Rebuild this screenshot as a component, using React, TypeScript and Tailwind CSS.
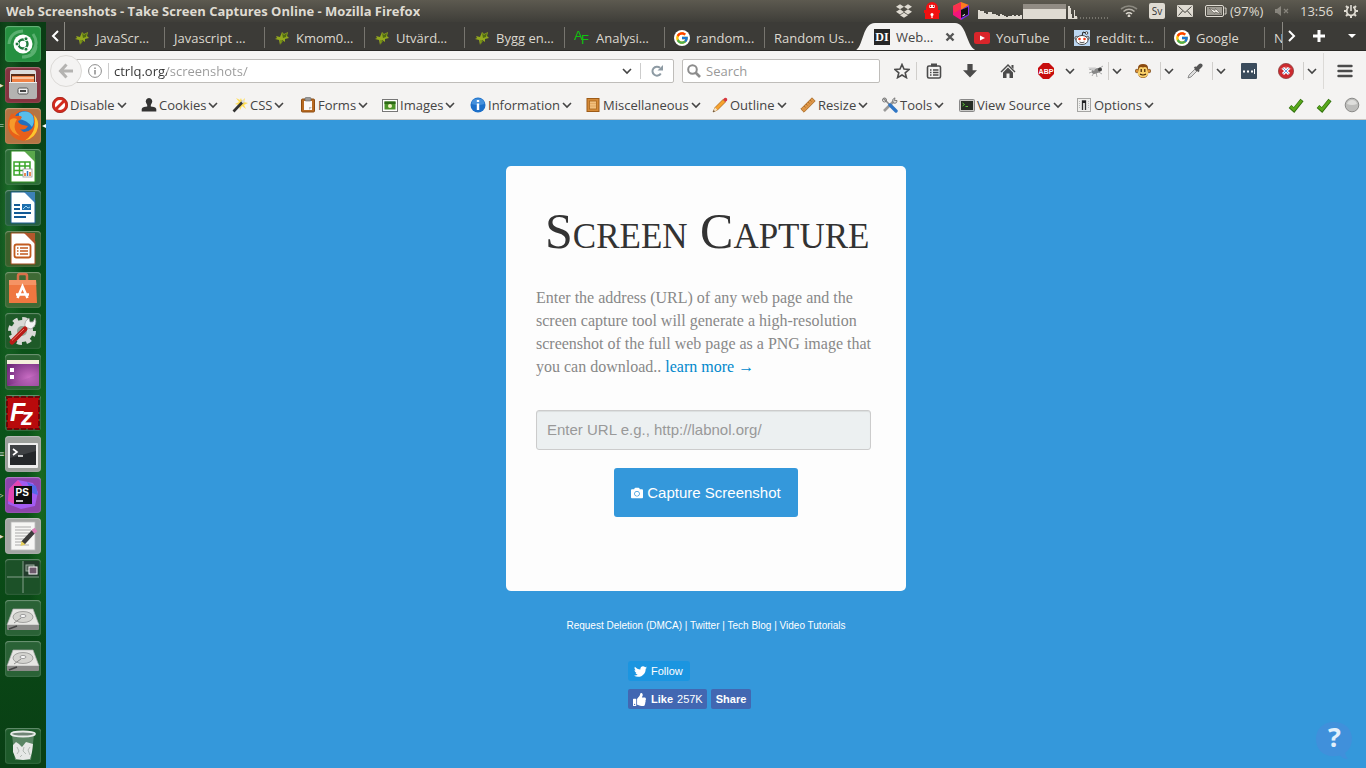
import React from "react";
import { FcGoogle } from "react-icons/fc";
import { FaTwitter, FaThumbsUp, FaDropbox, FaCamera } from "react-icons/fa";

type Kids = { children?: React.ReactNode };

const UI = "font-['Open_Sans','Noto_Sans',sans-serif]";
const SANS = "font-['Liberation_Sans',Arial,sans-serif]";

function Chevron({ className = "text-[#444]" }: { className?: string }) {
  return (
    <svg className={"h-2 w-[10px] shrink-0 " + className} viewBox="0 0 10 8" fill="none" stroke="currentColor" strokeWidth="1.6">
      <path d="M1 2 L5 6 L9 2" />
    </svg>
  );
}

/* ---------- system panel ---------- */

const graphBars = [9, 8, 8, 6, 5, 7, 7, 5, 5, 4, 3, 5, 4, 3, 2, 3, 3, 4, 3, 4, 3, 4];

function Panel() {
  return (
    <header className="flex h-[22px] shrink-0 items-center bg-linear-to-b from-[#5d5a50] to-[#3f3e39] pr-2 pb-px pl-[6px] text-[#dfdbd2]">
      <h1 className="truncate text-[13px] leading-5 font-bold">Web Screenshots - Take Screen Captures Online - Mozilla Firefox</h1>
      <div className="ml-auto flex shrink-0 items-center">
        <span className="flex w-7 justify-center"><FaDropbox className="h-4 w-4" /></span>
        <span className="flex w-7 justify-center">
          <svg className="h-[18px] w-4" viewBox="0 0 16 18">
            <path d="M2 9 V6 a6 6 0 0 1 12 0 V9 Z M0 8 H16 V11 H0 Z M1 11 H15 V17 H1 Z" fill="#f01010" />
            <path d="M5 3.500 Q8 2 11 3.500 L10.500 6 H5.500 Z" fill="#fff" />
            <path d="M6.500 3.500 V5 M9.500 3.500 V5" stroke="#c00" strokeWidth="1.200" />
            <circle cx="8" cy="12.500" r="1.500" fill="#fff" />
            <path d="M8 13 V16" stroke="#fff" strokeWidth="1.200" />
          </svg>
        </span>
        <span className="flex w-[30px] justify-center">
          <svg className="h-5 w-[18px]" viewBox="0 0 18 20">
            <path d="M9 1 L17 4 L9 9 L1 5 Z" fill="#fd7a1e" />
            <path d="M1 5 L9 9 L9 19 L1 14 Z" fill="#f3147c" />
            <path d="M9 1 L1 5 L2 12 L9 8 Z" fill="#f9304e" />
            <path d="M17 4 L17 14 L9 19 V9 Z" fill="#7c2cf0" />
            <path d="M9 9 L16 6 V13.500 L9 17 Z" fill="#111" />
            <path d="M10.500 14.800 L13 13.500" stroke="#fff" />
          </svg>
        </span>
        <svg className="mr-[3px] ml-[2px] h-4 w-[134px]" viewBox="0 0 134 16">
          {graphBars.map((h, i) => (
            <rect key={i} x={i * 2} y={16 - h} width="2" height={h} fill="#dfdbd2" />
          ))}
          <rect x="45" y="1" width="43" height="15" fill="#dfdbd2" />
          <rect x="45" y="1" width="43" height="5" fill="#918c84" />
          <path d="M90 16 V3 h2 V5 h1 V11 h1 V15 h2 V7 h1 V13 h2 V16 Z" fill="#dfdbd2" />
          <path d="M99 15 H132" stroke="#aaa69d" strokeWidth="1" strokeDasharray="1 2" />
        </svg>
        <span className="flex w-7 justify-center">
          <svg className="h-3 w-[18px]" viewBox="0 0 18 12" fill="none" stroke="#dfdbd2" strokeWidth="1.600">
            <path d="M1 4 Q9 -2 17 4" opacity=".4" />
            <path d="M3.500 6.500 Q9 2 14.500 6.500" opacity=".7" />
            <path d="M6 9 Q9 6.500 12 9" />
            <circle cx="9" cy="11" r=".6" />
          </svg>
        </span>
        <span className="flex w-7 justify-center">
          <span className="h-4 w-4 rounded-xs bg-[#dfdbd2] text-center text-[10px] leading-4 text-[#333]">Sv</span>
        </span>
        <span className="flex w-7 justify-center">
          <svg className="h-3 w-4" viewBox="0 0 16 12">
            <rect width="16" height="12" rx="1" fill="#dfdbd2" />
            <path d="M1.500 1.500 L8 7.500 L14.500 1.500 M1.500 10.500 L5.500 6 M14.500 10.500 L10.500 6" stroke="#45443f" fill="none" />
          </svg>
        </span>
        <svg className="mr-[3px] ml-[6px] h-3 w-[22px]" viewBox="0 0 22 12">
          <rect x=".5" y=".5" width="18" height="11" rx="1.500" fill="none" stroke="#dfdbd2" />
          <rect x="2" y="2" width="15" height="8" fill="#dfdbd2" opacity=".55" />
          <path d="M19.500 3 H21 V9 H19.500" fill="none" stroke="#dfdbd2" />
          <path d="M4 3 L10 5.500 L10.500 3.500 L16 9 L10 7 L9.500 8.500 Z" fill="#f2efe8" stroke="#55534c" strokeWidth=".6" />
        </svg>
        <span className="w-[34px] text-[13px] leading-5 whitespace-nowrap">(97%)</span>
        <span className="flex w-9 justify-center">
          <svg className="h-3 w-4 opacity-40" viewBox="0 0 16 12">
            <path d="M1 4 H3 L7 1 V11 L3 8 H1 Z" fill="#dfdbd2" />
            <path d="M10 4 L14 8 M14 4 L10 8" stroke="#dfdbd2" strokeWidth="1.200" />
          </svg>
        </span>
        <span className="w-11 text-[13px] leading-5">13:56</span>
        <svg className="h-[14px] w-[14px]" viewBox="0 0 14 14" fill="none" stroke="#dfdbd2">
          <circle cx="7" cy="7" r="4.300" strokeWidth="1.800" />
          <path d="M0 7 H2.500 M11.500 7 H14 M2 2 L4 4 M12 2 L10 4 M2 12 L4 10 M12 12 L10 10 M7 11.500 V14" strokeWidth="2" />
          <path d="M7 0 V7" stroke="#4d4b44" strokeWidth="4" />
          <path d="M7 1 V7" strokeWidth="1.600" />
        </svg>
      </div>
    </header>
  );
}

/* ---------- launcher ---------- */

const icons: Record<string, React.ReactNode> = {
  Dash: (
    <>
      <path d="M4 18 Q5 6 18 5 M31 20 Q30 31 17 31 M28 8 Q35 18 26 27" stroke="#8fd0a0" strokeWidth="3" fill="none" opacity=".5" />
      <circle cx="18" cy="18" r="9.500" fill="#fff" />
      <circle cx="18" cy="18" r="4.500" fill="none" stroke="#1d7a3c" strokeWidth="2.400" />
      <g fill="#1d7a3c" stroke="#fff" strokeWidth="1">
        <circle cx="12" cy="18" r="2" /><circle cx="21" cy="12.800" r="2" /><circle cx="21" cy="23.200" r="2" />
      </g>
    </>
  ),
  Files: (
    <>
      <path d="M5 5 Q5 3 7 3 H29 Q31 3 31 5 V16 H5 Z" fill="#dcdcdc" />
      <rect x="6" y="7" width="24" height="8" fill="#5a2d18" />
      <path d="M7 9 H29 V15 H7 Z" fill="#f08246" />
      <path d="M7 11 H29" stroke="#fbd9bd" strokeWidth="1.500" />
      <path d="M4 15 H32 V30 Q32 32 30 32 H6 Q4 32 4 30 Z" fill="#b4b3b1" />
      <path d="M4 15.500 H32" stroke="#eee" />
      <rect x="13" y="21" width="10" height="6" rx="1.500" fill="#eee" stroke="#555" />
      <path d="M15 24 H21" stroke="#444" strokeWidth="2" />
    </>
  ),
  Firefox: (
    <>
      <circle cx="18" cy="17.500" r="15" fill="#e8641b" />
      <circle cx="19" cy="13.500" r="10.500" fill="#1f6fc0" />
      <path d="M14 5 Q23 1 28 8 Q30 14 27 19 Q22 12 14 11 Z" fill="#58bdea" />
      <path d="M3 17 Q3 10 7 5 Q8 8 11 8 Q15 7 17 9 Q16 12 13 13 Q14 16 18 17 L23 18 Q20 23 15 21 Q20 27 26 23 Q30 19 29 9 Q34 14 33 19 Q31 32 18 32.500 Q4 31 3 17 Z" fill="#e8601a" />
      <path d="M29 7 Q34 12 33 19 Q31 30 20 32.500 Q28 27 29.500 19 Q30.500 13 29 7 Z" fill="#fbc52f" />
      <path d="M5 12 Q8 9 12 11 L10 15 Q8 23 15 28 Q5 25 4.500 17 Z" fill="#f79a2a" />
    </>
  ),
  Calc: (
    <>
      <path d="M6 2 H22 L30 10 V33 H6 Z" fill="#fff" stroke="#2f8f20" />
      <path d="M19 2 H30 V13 Z" fill="#5aa84b" />
      <g fill="none" stroke="#3aa628" strokeWidth="1.500">
        <rect x="9" y="13" width="16" height="13" /><path d="M9 17 H25 M9 21.500 H25 M14.500 13 V26 M20 13 V26" />
      </g>
      <rect x="18" y="20" width="9" height="8" fill="#fff" stroke="#999" strokeWidth=".8" />
      <path d="M20 27 V24 M25 27 V23" stroke="#e0641b" strokeWidth="1.500" />
      <path d="M22.500 27 V22" stroke="#2f76c5" strokeWidth="1.500" />
    </>
  ),
  Writer: (
    <>
      <path d="M6 2 H22 L30 10 V33 H6 Z" fill="#fff" stroke="#1a5a8e" />
      <path d="M19 2 H30 V13 Z" fill="#3d81b8" />
      <path d="M9 15 H15 M9 19 H15 M9 23 H26 M9 27 H21" stroke="#145a96" strokeWidth="2" />
      <rect x="17" y="14" width="9" height="6" fill="#1d6fae" />
      <path d="M18 19 L21 16 L23 18 L25 17" stroke="#9fd2ef" fill="none" />
    </>
  ),
  Impress: (
    <>
      <path d="M6 2 H22 L30 10 V33 H6 Z" fill="#fff" stroke="#a34a1c" />
      <path d="M19 2 H30 V13 Z" fill="#b3572c" />
      <rect x="9.500" y="13.500" width="16" height="13" rx="2" fill="#fff" stroke="#c25a1e" strokeWidth="1.800" />
      <path d="M15 17 H23 M15 20 H23 M15 23 H23" stroke="#c25a1e" strokeWidth="1.500" />
      <path d="M12 17 H13.500 M12 20 H13.500 M12 23 H13.500" stroke="#c25a1e" strokeWidth="1.500" />
    </>
  ),
  Software: (
    <>
      <path d="M13 9 V4 Q13 2 15 2 H20 Q22 2 22 4 V9" fill="none" stroke="#d9714a" strokeWidth="2.500" />
      <path d="M4 8 H31 L32 31 H4 Z" fill="#ef7740" />
      <path d="M4 8 H31 L31.300 13 H4 Z" fill="#f59364" />
      <path d="M12.500 26 L17.500 14.500 L22.500 26 M11 22.500 H24" stroke="#fff" strokeWidth="2.500" fill="none" />
    </>
  ),
  Settings: (
    <>
      <circle cx="17" cy="18" r="11" fill="#d9d9d7" />
      <circle cx="17" cy="18" r="12" fill="none" stroke="#d9d9d7" strokeWidth="4" strokeDasharray="5 4.400" />
      <circle cx="17" cy="18" r="5" fill="#95a497" />
      <path d="M20 14 Q19 8 24 5 L25 9 L28 9 L30 5 Q33 12 26 16 Z" fill="#f5f5f5" stroke="#999" strokeWidth=".7" />
      <path d="M7 29 L20 16" stroke="#b81c18" strokeWidth="5" strokeLinecap="round" />
      <path d="M7 27.500 L19 16" stroke="#ed766c" strokeWidth="1" />
    </>
  ),
  Workspace: (
    <>
      <rect x="2" y="6" width="32" height="26" rx="1" fill="url(#purple)" />
      <rect x="2" y="6" width="32" height="4" fill="#f4efdc" />
      <path d="M5 14 H9 V18 H5 Z M5 21 H9 V25 H5 Z" fill="#fff" />
      <path d="M2 32 L34 20 V32 Z" fill="#a355a8" opacity=".4" />
    </>
  ),
  FileZilla: (
    <>
      <rect x="2" y="2" width="32" height="32" fill="#b80a0c" stroke="#6c0808" strokeWidth="2" strokeDasharray="5 2" />
      <text x="5" y="26" fontSize="25" fontStyle="italic" fontWeight="bold" fill="#fff" fontFamily="Liberation Sans">
        F<tspan x="16" dy="4" fontSize="24">z</tspan>
      </text>
    </>
  ),
  Terminal: (
    <>
      <rect x="3" y="7" width="30" height="25" rx="1" fill="#eee" />
      <rect x="5" y="9" width="26" height="20" fill="#24272a" />
      <path d="M5 9 H31 V15 L5 22 Z" fill="#3e4144" />
      <path d="M8 13 L12 16 L8 19 M13 20 H18" stroke="#fff" strokeWidth="1.600" fill="none" />
    </>
  ),
  PhpStorm: (
    <>
      <path d="M4 12 L13 3 L28 6 L33 15 L30 29 L16 32 L3 27 Z" fill="#a35bf2" />
      <path d="M4 12 L13 3 L19 11 L9 27 L3 24 Z" fill="#e345b0" />
      <path d="M22 5 L31 9 L33 18 L27 16 Z" fill="#5468e8" />
      <rect x="9" y="9" width="18" height="18" fill="#0d0d10" />
      <text x="10.500" y="18.500" fontSize="10" fontWeight="bold" fill="#fff" fontFamily="Liberation Sans">PS</text>
      <path d="M11 24 H18" stroke="#fff" strokeWidth="1.500" />
    </>
  ),
  "Text Editor": (
    <>
      <rect x="6" y="4" width="24" height="28" fill="#f6f6f4" stroke="#bbb" strokeWidth=".8" />
      <path d="M10 9 H26 M10 12 H26 M10 15 H24 M10 18 H22 M10 21 H20 M10 24 H18 M10 27 H24" stroke="#aaa" strokeWidth="1" />
      <path d="M18 25 L29 13" stroke="#3b3b3b" strokeWidth="4.500" />
      <path d="M28 14 L31 11.500" stroke="#dd7fb8" strokeWidth="4.500" />
      <path d="M15.500 28 L16.500 23 L20.500 26.500 Z" fill="#e7d15c" />
    </>
  ),
  Workspaces: (
    <>
      <rect x="18" y="2" width="16" height="16" fill="#223c2c" />
      <path d="M18 2 V34 M2 18 H34" stroke="#83a08a" />
      <rect x="21" y="6" width="8" height="6" fill="#4f6055" stroke="#98aa9d" />
      <rect x="24" y="8" width="8" height="7" fill="#6c5a6c" stroke="#fff" />
    </>
  ),
  Disk: (
    <>
      <path d="M8 9 H28 L34 25 H2 Z" fill="#e6e6e3" stroke="#aaa" strokeWidth=".7" />
      <ellipse cx="18" cy="17" rx="10" ry="5.500" fill="#d3d3cf" stroke="#a2a2a0" />
      <ellipse cx="18" cy="16" rx="3" ry="1.500" fill="#fff" stroke="#999" />
      <path d="M9 23 L16 18" stroke="#8d8d8b" />
      <path d="M2 25 H34 V29 Q34 30 33 30 H3 Q2 30 2 29 Z" fill="#8a8a88" />
      <path d="M4 29 L12 26" stroke="#444" strokeWidth="1.500" />
    </>
  ),
  Trash: (
    <>
      <path d="M7 7 L10 32 H26 L29 7 Z" fill="#cfd8d1" opacity=".35" />
      <ellipse cx="18" cy="6" rx="12" ry="2.500" fill="#6f8575" stroke="#e8ece9" strokeWidth="1.800" />
      <path d="M8 17 L11 14 L14 16 L17 19 L21 14 L28 16 L27 24 L25 31 L18 32 L11 31 L8 24 Z" fill="#e6e8e6" />
      <path d="M12 19 L14 23 L12 26 M19 19 L18 23 L21 26 M25 19 L23 22 L25 27 M15 29 L17 27" stroke="#b3bab4" fill="none" />
    </>
  ),
};

const launcher = [
  { icon: "Dash", tile: "bg-[#259040]", mark: "" },
  { icon: "Files", tile: "bg-[#84333f]", mark: "▸" },
  { icon: "Firefox", tile: "bg-[#b57443]", mark: "=" },
  { icon: "Calc", tile: "bg-[#2c6c37]", mark: "" },
  { icon: "Writer", tile: "bg-[#266041]", mark: "" },
  { icon: "Impress", tile: "bg-[#3b602b]", mark: "" },
  { icon: "Software", tile: "bg-[#3e6a35]", mark: "" },
  { icon: "Settings", tile: "bg-[#1e5a28]", mark: "" },
  { icon: "Workspace", tile: "bg-[#2c6433]", mark: "" },
  { icon: "FileZilla", tile: "bg-[#256031]", mark: "" },
  { icon: "Terminal", tile: "bg-[#9b9f9b]", mark: "≡" },
  { icon: "PhpStorm", tile: "bg-[#8c44ab]", mark: "▹" },
  { icon: "Text Editor", tile: "bg-[#a3a5a3]", mark: "▸" },
  { icon: "Workspaces", tile: "bg-[#1c5128]", mark: "" },
  { icon: "Disk", tile: "bg-[#2a6236]", mark: "" },
  { icon: "Disk", tile: "bg-[#2a6236]", mark: "" },
];

function Tile({ icon, tile, mark }: { icon: string; tile: string; mark: string }) {
  return (
    <button type="button" aria-label={icon} className="relative flex w-full justify-center">
      {mark && <span className="absolute top-3 -left-px text-[9px] leading-3 text-[#d5ddd6]">{mark}</span>}
      {icon === "Firefox" && (
        <svg className="absolute top-4 right-0 h-1 w-1" viewBox="0 0 4 4" fill="#fff"><path d="M4 0 V4 L0 2 Z" /></svg>
      )}
      <svg className={"h-9 w-9 rounded-sm shadow-[inset_0_1px_1px_#ffffff44,inset_0_0_2px_#ffffff44] " + tile} viewBox="0 0 36 36">
        {icons[icon]}
      </svg>
    </button>
  );
}

function Launcher() {
  return (
    <nav
      aria-label="Launcher"
      className="flex w-[46px] shrink-0 flex-col gap-[5px] bg-[#0b4c18] bg-[radial-gradient(ellipse_at_20%_25%,#1d6b2a_0%,transparent_30%),radial-gradient(ellipse_at_90%_62%,#1a6a20_0%,transparent_25%),linear-gradient(#0a3c14,#0b5519_50%,#093f14)] pt-1 pb-1"
    >
      <svg className="absolute h-0 w-0" aria-hidden="true">
        <defs>
          <radialGradient id="purple" cx=".7" cy=".7" r=".8">
            <stop offset="0" stopColor="#cc6fc6" />
            <stop offset="1" stopColor="#6f2a7a" />
          </radialGradient>
        </defs>
      </svg>
      {launcher.map((l, i) => (
        <Tile key={i} {...l} />
      ))}
      <div className="flex flex-1 flex-col justify-end">
        <Tile icon="Trash" tile="bg-[#1d5a2a]" mark="" />
      </div>
    </nav>
  );
}

/* ---------- tabs ---------- */

const leaf = (
  <svg className="h-4 w-4" viewBox="0 0 16 16">
    <path d="M2 6 L6 7 L8 2 L10 4 L14 2 L13 6 L15 8 L11 9 L11 12 L8 10 L6 15 L5 10 L1 9 L3 8 Z" fill="#93a81d" />
    <path d="M8 3 L10 5 L13 3 L12 7 L9 8 Z" fill="#4f6a12" />
    <path d="M6 10 L9 11 L7 14 Z" fill="#6f8a14" />
  </svg>
);
const google = (
  <span className="flex h-4 w-4 items-center justify-center rounded-full bg-white">
    <FcGoogle className="h-[14px] w-[14px]" />
  </span>
);
const af = (
  <svg className="h-4 w-4" viewBox="0 0 16 16">
    <text x="0" y="10" fontSize="13" fill="#0fc40f" fontFamily="Liberation Sans">
      A<tspan x="7" dy="4">F</tspan>
    </text>
  </svg>
);
const youtube = (
  <svg className="h-4 w-4" viewBox="0 0 16 16">
    <rect y="2" width="16" height="12" rx="2.500" fill="#d9252a" />
    <path d="M6 5.500 L11 8 L6 10.500 Z" fill="#fff" />
  </svg>
);
const reddit = (
  <svg className="h-4 w-4" viewBox="0 0 16 16">
    <rect width="16" height="16" fill="#bcd7f2" />
    <path d="M8 6 L9 2 L12 3" fill="none" stroke="#222" />
    <circle cx="12.500" cy="3" r="1.300" fill="#fff" stroke="#222" strokeWidth=".8" />
    <circle cx="2.500" cy="8" r="1.600" fill="#fff" stroke="#222" strokeWidth=".8" />
    <circle cx="13.500" cy="8" r="1.600" fill="#fff" stroke="#222" strokeWidth=".8" />
    <ellipse cx="8" cy="10" rx="6" ry="4.500" fill="#fff" stroke="#222" strokeWidth=".8" />
    <circle cx="5.500" cy="9" r="1.300" fill="#f33b1a" />
    <circle cx="10.500" cy="9" r="1.300" fill="#f33b1a" />
    <path d="M5.500 12 Q8 13.500 10.500 12" fill="none" stroke="#222" strokeWidth=".8" />
  </svg>
);

const tabsBefore = [
  { icon: leaf, text: "JavaScr…" },
  { icon: null, text: "Javascript …" },
  { icon: leaf, text: "Kmom0…" },
  { icon: leaf, text: "Utvärd…" },
  { icon: leaf, text: "Bygg en…" },
  { icon: af, text: "Analysi…" },
  { icon: google, text: "random…" },
  { icon: null, text: "Random Us…" },
];
const tabsAfter = [
  { icon: youtube, text: "YouTube" },
  { icon: reddit, text: "reddit: t…" },
  { icon: google, text: "Google" },
  { icon: null, text: "N" },
];

function Tab({ icon, text, line }: { icon: React.ReactNode; text: string; line: boolean }) {
  return (
    <button
      type="button"
      role="tab"
      aria-selected="false"
      className={"mt-[5px] mb-[2px] flex w-[100px] shrink-0 items-center gap-[6px] overflow-hidden border-r pl-[9px] text-[13px] leading-5 whitespace-nowrap " + (line ? "border-[#77756f]" : "border-transparent")}
    >
      {icon}
      {text}
    </button>
  );
}

function TabBar() {
  return (
    <div className="flex h-[29px] border-b border-[#2a2926] bg-[#3c3b37] text-[#dcd8cf]">
      <button type="button" aria-label="Scroll tabs left" className="flex w-[19px] shrink-0 items-center justify-center border-r border-[#8a8882] text-white">
        <svg className="h-3 w-2" viewBox="0 0 8 12" fill="none" stroke="currentColor" strokeWidth="2"><path d="M7 1 L2 6 L7 11" /></svg>
      </button>
      <div role="tablist" className="flex min-w-0 flex-1 overflow-hidden">
        {tabsBefore.map((t, i) => (
          <Tab key={i} {...t} line={i < 7} />
        ))}
        <div className="relative mt-px -mb-px flex w-[100px] shrink-0 items-center text-[#444]">
          <svg className="absolute top-0 -left-3 h-full w-[126px]" viewBox="0 0 126 28" preserveAspectRatio="none">
            <path d="M0 28 C11 28 8 0 22 0 H102 C115 0 113 28 126 28 Z" fill="#f4f3f2" />
          </svg>
          <button type="button" role="tab" aria-selected="true" className="relative flex flex-1 items-center gap-[6px] pl-[9px] text-[13px] leading-5">
            <span className="h-4 w-4 bg-[#262626] text-center font-['Liberation_Serif',serif] text-[12px] leading-4 font-bold text-white">DI</span>
            Web…
          </button>
          <button type="button" aria-label="Close tab" className="relative mr-[10px]">
            <svg className="h-[10px] w-[10px]" viewBox="0 0 10 10" stroke="#555" strokeWidth="2.400"><path d="M1.500 1.500 L8.500 8.500 M8.500 1.500 L1.500 8.500" /></svg>
          </button>
        </div>
        {tabsAfter.map((t, i) => (
          <Tab key={i} {...t} line />
        ))}
      </div>
      <div className="flex shrink-0 text-white">
        <button type="button" aria-label="Scroll tabs right" className="flex w-[18px] items-center justify-center border-l border-[#8a8882] bg-[#3c3b37]">
          <svg className="h-3 w-2" viewBox="0 0 8 12" fill="none" stroke="currentColor" strokeWidth="2"><path d="M1 1 L6 6 L1 11" /></svg>
        </button>
        <button type="button" aria-label="New tab" className="flex w-[38px] items-center justify-center">
          <svg className="h-3 w-3" viewBox="0 0 12 12" stroke="currentColor" strokeWidth="3"><path d="M6 0 V12 M0 6 H12" /></svg>
        </button>
        <button type="button" aria-label="List all tabs" className="flex w-7 items-center justify-center">
          <svg className="h-1 w-2" viewBox="0 0 8 4" fill="currentColor"><path d="M0 0 H8 L4 4 Z" /></svg>
        </button>
      </div>
    </div>
  );
}

/* ---------- navigation bar ---------- */

function Tool({ label, width, children }: Kids & { label: string; width: string }) {
  return (
    <button type="button" aria-label={label} className={"flex h-6 shrink-0 items-center justify-center text-[#4b4b4b] " + width}>
      {children}
    </button>
  );
}
const Sep = () => <span className="h-[18px] w-px shrink-0 bg-[#d0cecb]" />;

function NavBar() {
  return (
    <div className="flex h-10 items-center bg-[#f4f3f2] pl-1 text-[#333]">
      <button type="button" aria-label="Back" className="z-10 flex h-8 w-8 shrink-0 items-center justify-center rounded-full border border-[#dcdad7] bg-[#f4f3f2]">
        <svg className="h-4 w-4" viewBox="0 0 16 16" fill="none" stroke="#b4b3b1" strokeWidth="3"><path d="M8.500 1.500 L2.500 8 L8.500 14.500 M3 8 H15" /></svg>
      </button>
      <div className="-ml-2 flex h-6 min-w-0 flex-1 items-center rounded-r-xs border border-[#bfbdba] bg-white pl-[13px]">
        <svg className="h-[14px] w-[14px] shrink-0" viewBox="0 0 14 14" fill="none" stroke="#8c8c8c">
          <circle cx="7" cy="7" r="6.400" /><path d="M7 6 V10.500 M7 3.500 V5" strokeWidth="1.500" />
        </svg>
        <span className="mr-[5px] ml-[6px] h-4 w-px shrink-0 bg-[#ccc]" />
        <input
          aria-label="Address"
          defaultValue="ctrlq.org/screenshots/"
          className="min-w-0 flex-1 bg-[linear-gradient(90deg,#333_53px,#999_53px)] bg-clip-text text-[13px] leading-5 text-transparent caret-black outline-none"
        />
        <button type="button" aria-label="History" className="flex w-6 justify-center"><Chevron /></button>
        <span className="ml-px h-4 w-px bg-[#ccc]" />
        <button type="button" aria-label="Reload" className="flex w-8 justify-center">
          <svg className="h-3 w-3" viewBox="0 0 12 12" fill="none" stroke="#8d9aa3" strokeWidth="2"><path d="M9.800 8.500 A4.500 4.500 0 1 1 9 2.800" /><path d="M12 0 V5.500 H6.500 Z" fill="#8d9aa3" stroke="none" /></svg>
        </button>
      </div>
      <label className="ml-2 flex h-6 w-[198px] shrink-0 items-center gap-[5px] rounded-xs border border-[#bfbdba] bg-white pl-1">
        <svg className="h-[14px] w-[14px]" viewBox="0 0 14 14" fill="none" stroke="#8c8c8c" strokeWidth="2"><circle cx="5.500" cy="5.500" r="4.300" /><path d="M8.500 8.500 L13 13" strokeWidth="2.600" /></svg>
        <input aria-label="Search" placeholder="Search" className="min-w-0 flex-1 text-[13px] leading-5 outline-none placeholder:text-[#999]" />
      </label>
      <div className="ml-2 flex shrink-0 items-center">
        <Tool label="Bookmark" width="w-7">
          <svg className="h-4 w-4" viewBox="0 0 16 16" fill="none" stroke="currentColor" strokeWidth="1.600"><path d="M8 1.500 L10 6 L15 6.500 L11.200 9.800 L12.400 14.600 L8 12 L3.600 14.600 L4.800 9.800 L1 6.500 L6 6 Z" /></svg>
        </Tool>
        <Sep />
        <Tool label="Bookmarks list" width="w-[34px]">
          <svg className="h-4 w-4" viewBox="0 0 16 16" fill="none" stroke="currentColor" strokeWidth="1.600"><rect x="1.500" y="3" width="13" height="12" rx="1.500" /><path d="M5 2 H11" strokeWidth="3" /><path d="M4 7 H5.500 M7 7 H12.500 M4 9.500 H5.500 M7 9.500 H12.500 M4 12 H5.500 M7 12 H12.500" strokeWidth="1.300" /></svg>
        </Tool>
        <Tool label="Downloads" width="w-[38px]"><svg className="h-[14px] w-[14px]" viewBox="0 0 16 16" fill="currentColor"><path d="M5 0 H11 V7 H16 L8 15.500 L0 7 H5 Z" /></svg></Tool>
        <Tool label="Home" width="w-[38px]"><svg className="h-4 w-4" viewBox="0 0 16 16" fill="currentColor"><path d="M8 1 L15.500 8.500 L14.500 9.500 L8 3 L1.500 9.500 L.5 8.500 Z M11.500 2 H13.500 V6 L11.500 4 Z M3 9.500 L8 4.500 L13 9.500 V15 H9.500 V10.500 H6.500 V15 H3 Z" /></svg></Tool>
        <Tool label="Adblock Plus" width="w-[38px]">
          <svg className="h-4 w-4" viewBox="0 0 16 16"><path d="M5 0 H11 L16 5 V11 L11 16 H5 L0 11 V5 Z" fill="#c70d0d" /><text x="8" y="10.500" textAnchor="middle" fontSize="7" fontWeight="bold" fill="#fff" fontFamily="Liberation Sans">ABP</text></svg>
        </Tool>
        <Tool label="Adblock menu" width="w-[10px]"><Chevron /></Tool>
        <Tool label="Firebug" width="w-[33px] pl-2">
          <svg className="h-4 w-4" viewBox="0 0 16 16"><path d="M1 6 L7 8 L15 3 M1 10 L7 8 L4 13 M9 8 L14 11 M8 9 L9 14" stroke="#aaa" fill="none" /><ellipse cx="8" cy="8" rx="4.500" ry="2.500" fill="#888" transform="rotate(-20 8 8)" /><circle cx="12" cy="6.500" r="2" fill="#444" /><path d="M0 4.500 L8 4.500 L6 8 Z" fill="#ccc" /></svg>
        </Tool>
        <Sep />
        <Tool label="Firebug menu" width="w-4"><Chevron /></Tool>
        <Tool label="Greasemonkey" width="w-[35px]">
          <svg className="h-4 w-4" viewBox="0 0 16 16"><circle cx="2" cy="8" r="1.800" fill="#d98c33" stroke="#5a3008" strokeWidth=".6" /><circle cx="14" cy="8" r="1.800" fill="#d98c33" stroke="#5a3008" strokeWidth=".6" /><path d="M3 5 Q3 1 8 1 Q13 1 13 5 V11 Q12 15 8 15 Q4 15 3 11 Z" fill="#8a4a10" /><path d="M3.500 7 Q4 3 8 4.500 Q12 3 12.500 7 L13.500 11 Q11 14.500 8 14.500 Q5 14.500 2.500 11 Z" fill="#f8cf68" /><path d="M6.200 6 V9 M9.800 6 V9 M5 11 Q8 13 11 11" stroke="#3b1e05" strokeWidth="1.200" fill="none" /></svg>
        </Tool>
        <Sep />
        <Tool label="Greasemonkey menu" width="w-4"><Chevron /></Tool>
        <Tool label="Color picker" width="w-[35px]">
          <svg className="h-4 w-4" viewBox="0 0 16 16"><path d="M1 15 L2 12 L8.500 5.500 L10.500 7.500 L4 14 Z" fill="#ddd" stroke="#777" strokeWidth=".8" /><path d="M7.500 4 L12 8.500" stroke="#555" strokeWidth="2" /><path d="M10 6 L13.500 2.500" stroke="#555" strokeWidth="4" strokeLinecap="round" /></svg>
        </Tool>
        <Sep />
        <Tool label="Color picker menu" width="w-4"><Chevron /></Tool>
        <Tool label="Passwords" width="w-10">
          <svg className="h-4 w-4" viewBox="0 0 16 16"><rect width="16" height="16" rx="1" fill="#3a4b5c" /><path d="M2 8.500 h2 M6 8.500 h2 M10 8.500 h2" stroke="#fff" strokeWidth="2" /><path d="M13.500 6 V11" stroke="#fff" /></svg>
        </Tool>
        <Tool label="Web Developer" width="w-[34px]">
          <svg className="h-4 w-4" viewBox="0 0 16 16"><circle cx="8" cy="8" r="7.600" fill="#cc2a2f" stroke="#8f4040" strokeWidth=".8" /><path d="M2 6 Q8 1 14 6 Q8 8 2 6" fill="#ee8d8d" opacity=".6" /><path d="M5 5 L11 11 M11 5 L5 11" stroke="#fff" strokeWidth="3" /><path d="M5.300 5.300 L10.700 10.700 M10.700 5.300 L5.300 10.700" stroke="#6aa3dc" strokeWidth="1" /></svg>
        </Tool>
        <Sep />
        <Tool label="Web Developer menu" width="w-4"><Chevron /></Tool>
        <span className="ml-[3px] h-9 w-px bg-[#dcdad7]" />
        <Tool label="Open menu" width="w-[42px]"><svg className="h-[14px] w-4" viewBox="0 0 16 14" stroke="currentColor" strokeWidth="2.400" strokeLinecap="round"><path d="M1.500 2 H14.500 M1.500 7 H14.500 M1.500 12 H14.500" /></svg></Tool>
      </div>
    </div>
  );
}

/* ---------- developer toolbar ---------- */

const devIcons: Record<string, React.ReactNode> = {
  Disable: <><circle cx="8" cy="8" r="6.500" fill="#fff" stroke="#d32b1e" strokeWidth="2.800" /><path d="M3.500 12.500 L12.500 3.500" stroke="#d32b1e" strokeWidth="2.800" /><circle cx="8" cy="8" r="7.700" fill="none" stroke="#8f1a12" strokeWidth=".6" /></>,
  Cookies: <path d="M8 1 a3.300 3.300 0 0 1 2.800 5 L9.800 8 V9.500 L13 10 Q15 10.500 15.300 12 V14.500 H.7 V12 Q1 10.500 3 10 L6.200 9.500 V8 L5.200 6 A3.300 3.300 0 0 1 8 1 Z" fill="#333" />,
  CSS: <><path d="M9 1 L10 4 L13 1 L12 5 L16 6 L12 8 L14 12 L10 9 L8 13 L7 8 L3 7 L7 5 L4 1 L8 3 Z" fill="#ffdd55" /><path d="M1.500 14.500 L11 4.500" stroke="#333" strokeWidth="2.600" /><path d="M10 5.500 L12 3.500" stroke="#ddd" strokeWidth="2.600" /></>,
  Forms: <><rect x="1.500" y="2" width="13" height="13" rx="1" fill="#b86a22" stroke="#8d4d11" /><path d="M4 4 H12 V13 H4 Z" fill="#fafafa" /><path d="M9 13 L12 10 H9 Z" fill="#bbb" /><rect x="5" y=".5" width="6" height="3.500" rx="1" fill="#999" stroke="#666" strokeWidth=".6" /></>,
  Images: <><rect x=".5" y="2.500" width="15" height="12" fill="#fff" stroke="#777" /><rect x="2.500" y="4.500" width="11" height="8" fill="#4c9427" /><path d="M2.500 4.500 H13.500 V7 H2.500 Z" fill="#2d6917" /><circle cx="8" cy="9" r="2" fill="#f2f2c5" /></>,
  Information: <><circle cx="8" cy="8" r="7.500" fill="#1c6fc9" /><path d="M1.500 7 Q2 1.500 8 1.500 Q14 1.500 14.500 7 Q8 9 1.500 7" fill="#5fa6ea" opacity=".6" /><path d="M8 3 V5 M8 6.500 V13" stroke="#fff" strokeWidth="2.400" /></>,
  Miscellaneous: <><rect x="2" y="1.500" width="12" height="13" fill="#d58a37" stroke="#9d5b17" /><rect x="4.500" y="4" width="7" height="8" fill="#f2bf7c" stroke="#a8671f" strokeWidth=".8" /><path d="M5 6.500 H11 M5 9 H11" stroke="#e0a057" strokeWidth=".7" /></>,
  Outline: <><path d="M1 15 L3 10.500 L11 2.500 L13.500 5 L5.500 13 Z" fill="#f7a22d" stroke="#a05c0e" strokeWidth=".7" /><path d="M11 2.500 L12.500 1 Q14 .5 15 1.500 Q15.500 3 15 3.500 L13.500 5 Z" fill="#d7373f" /><path d="M3 10.500 L5.500 13 L1 15 Z" fill="#f6e3c5" /><path d="M1 15 L1.800 13.200 L2.800 14.200 Z" fill="#222" /></>,
  Resize: <><path d="M.8 12 L12 .8 L15.200 4 L4 15.200 Z" fill="#dc9547" stroke="#a5641f" strokeWidth=".8" /><path d="M4 9 L5.500 10.500 M6 7 L7.500 8.500 M8 5 L9.500 6.500 M10 3 L11.500 4.500" stroke="#a5641f" strokeWidth=".8" /></>,
  Tools: <><path d="M2 14 L12 4" stroke="#999" strokeWidth="2.600" /><path d="M11 5 Q9.500 2 13 .8 L12.500 3.500 L15 3.500 Q15 7 11.500 6 Z" fill="#ddd" stroke="#666" strokeWidth=".8" /><path d="M1.500 1.500 L8 8" stroke="#888" strokeWidth="1.600" /><path d="M8 8 L14 14" stroke="#2f76c5" strokeWidth="3.400" strokeLinecap="round" /><circle cx="2.500" cy="3" r="2" fill="none" stroke="#777" /></>,
  "View Source": <><rect x=".5" y="2.500" width="15" height="12" rx="1" fill="#c8c8c6" stroke="#888" /><rect x="2" y="4" width="12" height="9" fill="#252c25" /><path d="M3.500 6 L5.500 7.500 L3.500 9 M6.500 9.500 H9" stroke="#5fd33c" fill="none" strokeWidth=".9" /></>,
  Options: <><rect x="1.500" y="1.500" width="13" height="13" fill="#efefed" stroke="#a5a5a3" /><path d="M6.500 13 V4 H9.500 V13" fill="none" stroke="#333" strokeWidth="1.300" /><path d="M6 4 H10 V6 H6 Z" fill="#222" /><path d="M3.500 4 V12 M12.500 4 V12" stroke="#bbb" strokeDasharray="1 1" /></>,
};

const devItems = [
  { label: "Disable", width: "w-[89px]" },
  { label: "Cookies", width: "w-[91px]" },
  { label: "CSS", width: "w-[68px]" },
  { label: "Forms", width: "w-[82px]" },
  { label: "Images", width: "w-[88px]" },
  { label: "Information", width: "w-[115px]" },
  { label: "Miscellaneous", width: "w-[127px]" },
  { label: "Outline", width: "w-[88px]" },
  { label: "Resize", width: "w-[82px]" },
  { label: "Tools", width: "w-[77px]" },
  { label: "View Source", width: "w-[117px]" },
  { label: "Options", width: "w-[90px]" },
];

const Check = () => (
  <svg className="h-4 w-4" viewBox="0 0 16 16"><path d="M2 9.500 L6 13 L14 3" fill="none" stroke="#2f6f0c" strokeWidth="4" /><path d="M2.500 9.700 L6 12.600 L13.500 3.500" fill="none" stroke="#59a81c" strokeWidth="2.600" /></svg>
);

function DevBar() {
  return (
    <div className="flex h-[29px] items-center border-b border-[#c9c6c2] bg-[#f4f3f2] pr-[6px] pl-[6px] text-[#444]">
      {devItems.map((d) => (
        <button key={d.label} type="button" className={"flex shrink-0 items-center gap-[2px] text-[13px] leading-5 whitespace-nowrap " + d.width}>
          <svg className="h-4 w-4 shrink-0" viewBox="0 0 16 16">{devIcons[d.label]}</svg>
          {d.label}
          <Chevron />
        </button>
      ))}
      <div className="ml-auto flex gap-3">
        <Check />
        <Check />
        <svg className="h-4 w-4" viewBox="0 0 16 16"><circle cx="8" cy="8" r="6.800" fill="#bdbdbb" stroke="#8a8a88" /><path d="M3 7 Q4 3 8 3 Q12 3 13 7 Q8 9 3 7" fill="#dededc" /></svg>
      </div>
    </div>
  );
}

/* ---------- web page ---------- */

function Page() {
  return (
    <main className={"relative flex flex-1 flex-col items-center bg-[#3498db] pt-[46px] text-white " + SANS}>
      <section className="flex w-[400px] flex-col rounded-[5px] bg-[#fdfdfd] px-[30px] pt-[37px] pb-[74px]">
        <h2 className="pl-[9px] font-['Liberation_Serif',serif] text-[50px] leading-[56px] whitespace-nowrap text-[#333] [font-variant-caps:small-caps]">Screen Capture</h2>
        <p className="mt-[27px] font-['Liberation_Serif',serif] text-[16px] leading-[23px] whitespace-nowrap text-[#888]">
          Enter the address (URL) of any web page and the<br />
          screen capture tool will generate a high-resolution<br />
          screenshot of the full web page as a PNG image that<br />
          you can download.. <a href="#learn" className="text-[#0088cc]">learn more →</a>
        </p>
        <input
          aria-label="Web page address"
          placeholder="Enter URL e.g., http://labnol.org/"
          className="mt-8 h-10 w-[335px] rounded-[3px] border border-[#ccc] bg-[#ecf0f1] px-[10px] pb-[2px] text-[15px] leading-5 text-[#555] shadow-[inset_0_1px_1px_#00000013] outline-none placeholder:text-[#999]"
        />
        <button type="button" className="mt-[18px] flex h-[49px] w-[184px] items-center justify-center gap-1 self-center rounded-[3px] bg-[#3498db] text-[15px] leading-5 whitespace-nowrap text-white">
          <FaCamera className="h-3 w-3" />
          Capture Screenshot
        </button>
      </section>
      <nav aria-label="Footer" className="mt-7 text-[10px] leading-[14px] whitespace-nowrap">
        <a href="#dmca">Request Deletion (DMCA)</a> | <a href="#twitter">Twitter</a> | <a href="#blog">Tech Blog</a> | <a href="#videos">Video Tutorials</a>
      </nav>
      <div className="mt-7 flex w-[156px] flex-col items-start gap-2 text-[11px] leading-5">
        <a href="#follow" className="flex h-5 items-center gap-1 rounded-[3px] bg-[#1b95e0] pr-[7px] pl-[6px]">
          <FaTwitter className="h-[13px] w-[13px]" />
          Follow
        </a>
        <div className="flex gap-1">
          <button type="button" className="flex h-5 items-center rounded-[2px] bg-[#4267b2] pr-1 pl-[5px] whitespace-nowrap">
            <FaThumbsUp className="mr-[5px] h-[13px] w-[13px]" />
            <b className="mr-1">Like</b>257K
          </button>
          <button type="button" className="h-5 rounded-[2px] bg-[#4267b2] px-[5px] font-bold">Share</button>
        </div>
      </div>
      <button type="button" aria-label="Help" className="absolute right-3 bottom-2 h-[40px] w-10">
        <svg className="h-10 w-10" viewBox="0 0 40 40">
          <path d="M20 2 C31 2 38 9 38 19 C38 25 35 30 31 33 Q32 37 34 39 Q29 39 26 35.500 C12 39 2 31 2 19 C2 9 9 2 20 2 Z" fill="#4090db" />
          <text x="20.500" y="27" textAnchor="middle" fontSize="27" fontWeight="bold" fill="#e2f0fb" fontFamily="Open Sans">?</text>
        </svg>
      </button>
    </main>
  );
}

export default function App() {
  return (
    <div className={"flex min-h-screen flex-col " + UI}>
      <Panel />
      <div className="flex flex-1">
        <Launcher />
        <div className="flex min-w-0 flex-1 flex-col">
          <TabBar />
          <NavBar />
          <DevBar />
          <Page />
        </div>
      </div>
    </div>
  );
}
